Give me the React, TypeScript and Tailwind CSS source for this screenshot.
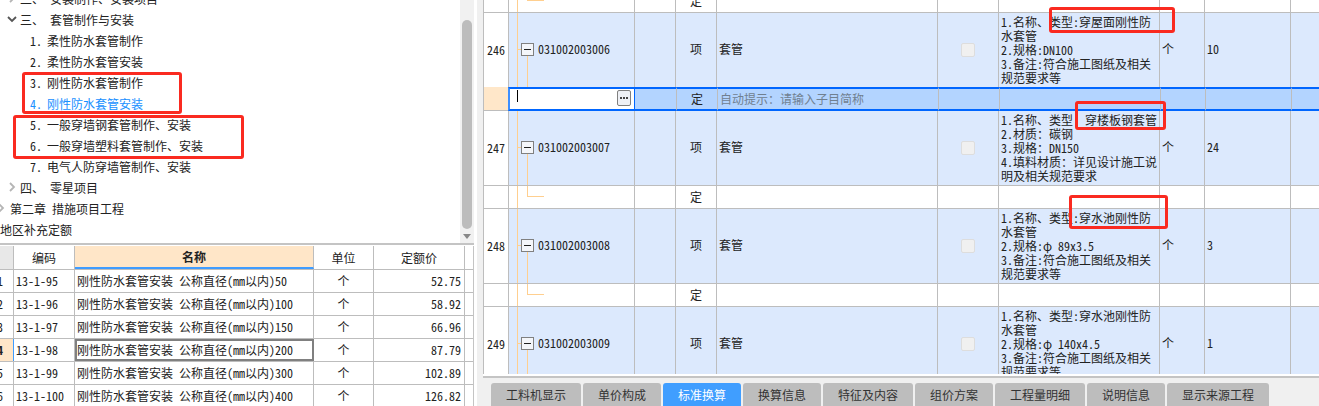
const font = "font-['Noto_Sans_Mono_CJK_SC','Liberation_Serif','Noto_Sans_CJK_SC',monospace]";

type TreeRow = { num?: string; text: string; pad: string; blue?: boolean; arrow?: "open" | "closed" };

const treeRows: TreeRow[] = [
  { text: "二、 安装制作、安装项目", pad: "pl-[20px]", arrow: "closed" },
  { text: "三、 套管制作与安装", pad: "pl-[20px]", arrow: "open" },
  { num: "1.", text: "柔性防水套管制作", pad: "pl-[30px]" },
  { num: "2.", text: "柔性防水套管安装", pad: "pl-[30px]" },
  { num: "3.", text: "刚性防水套管制作", pad: "pl-[30px]" },
  { num: "4.", text: "刚性防水套管安装", pad: "pl-[30px]", blue: true },
  { num: "5.", text: "一般穿墙钢套管制作、安装", pad: "pl-[30px]" },
  { num: "6.", text: "一般穿墙塑料套管制作、安装", pad: "pl-[30px]" },
  { num: "7.", text: "电气人防穿墙管制作、安装", pad: "pl-[30px]" },
  { text: "四、 零星项目", pad: "pl-[20px]", arrow: "closed" },
  { text: "第二章 措施项目工程", pad: "pl-[10px]", arrow: "closed" },
  { text: "地区补充定额", pad: "pl-0" },
];

const quotaRows = [
  ["1", "13-1-95", "刚性防水套管安装 公称直径(mm以内)50", "52.75"],
  ["2", "13-1-96", "刚性防水套管安装 公称直径(mm以内)100", "58.92"],
  ["3", "13-1-97", "刚性防水套管安装 公称直径(mm以内)150", "66.96"],
  ["4", "13-1-98", "刚性防水套管安装 公称直径(mm以内)200", "87.79"],
  ["5", "13-1-99", "刚性防水套管安装 公称直径(mm以内)300", "102.89"],
  ["6", "13-1-100", "刚性防水套管安装 公称直径(mm以内)400", "126.82"],
];

const tabs = [
  ["工料机显示", "w-[90px]"],
  ["单价构成", "w-[78px]"],
  ["标准换算", "w-[78px]"],
  ["换算信息", "w-[78px]"],
  ["特征及内容", "w-[90px]"],
  ["组价方案", "w-[78px]"],
  ["工程量明细", "w-[90px]"],
  ["说明信息", "w-[78px]"],
  ["显示来源工程", "w-[102px]"],
];

const cols = "grid grid-cols-[25px_126px_41px_41px_221px_61px_161px_45px_86px_29px]";
const cell = "border-r border-[#bdbdbd] h-full flex items-center";
const editCell = "bg-[#b3d4ff] border-y-2 border-[#0066ff] border-l border-l-[#bdbdbd]";

function Box({ className }: { className: string }) {
  return <div className={`absolute border-[3px] border-[#fa2a20] rounded-[3px] pointer-events-none ${className}`} />;
}

function Chevron({ open, className }: { open: boolean; className: string }) {
  return (
    <svg width="10" height="10" viewBox="0 0 10 10" className={`absolute ${className}`}>
      <path
        d={open ? "M1 3l4 4 4-4" : "M3 1l4 4-4 4"}
        fill="none"
        stroke={open ? "#555555" : "#b5b5b5"}
        strokeWidth="1.8"
      />
    </svg>
  );
}

function DefRow() {
  return (
    <div className={`${cols} h-[23px] border-b border-[#bdbdbd] bg-white shrink-0`}>
      <div className={cell} />
      <div className={`${cell} relative`}>
        <div className="absolute left-[8px] top-0 bottom-0 w-px bg-[#ffcf8f]" />
        <div className="absolute left-[18px] top-0 h-[11px] w-[17px] border-l border-b border-[#ffcf8f]" />
      </div>
      <div className={cell} />
      <div className={`${cell} justify-center`}>定</div>
      <div className={cell} />
      <div className={cell} />
      <div className={cell} />
      <div className={cell} />
      <div className={cell} />
      <div />
    </div>
  );
}

function ItemRow({ no, code, lines, qty }: { no: string; code: string; lines: string[]; qty: string }) {
  return (
    <div className={`${cols} h-[75px] border-b border-[#bdbdbd] bg-[#dce9fd] shrink-0`}>
      <div className={`${cell} bg-white justify-center pb-[1px]`}>{no}</div>
      <div className={`${cell} relative pl-[29px] pb-[3px]`}>
        <div className="absolute left-[8px] top-0 bottom-0 w-px bg-[#ffcf8f]" />
        <div className="absolute left-[8px] top-[36px] w-[5px] h-px bg-[#ffcf8f]" />
        <div className="absolute left-[18px] top-[42px] bottom-0 w-px bg-[#ffcf8f]" />
        <div className="absolute left-[12px] top-[30px] w-[13px] h-[13px] border border-[#808080] bg-[#f4f6fa] flex items-center justify-center">
          <div className="w-[7px] h-px bg-[#222222]" />
        </div>
        {code}
      </div>
      <div className={cell} />
      <div className={`${cell} justify-center pb-[2px]`}>项</div>
      <div className={`${cell} pl-[2px] pb-[2px]`}>套管</div>
      <div className={`${cell} justify-center`}>
        <div className="w-[14px] h-[14px] rounded-[2px] bg-[#f0f0f0] border border-[#dddddd]" />
      </div>
      <div className={`${cell} pl-[2px]`}>
        <div className="leading-[14px] whitespace-pre">
          {lines.map((l) => (
            <div key={l}>{l}</div>
          ))}
        </div>
      </div>
      <div className={`${cell} pl-[2px] pb-[2px]`}>个</div>
      <div className={`${cell} pl-[2px] pb-[2px]`}>{qty}</div>
      <div />
    </div>
  );
}

function EditRow() {
  return (
    <div className={`${cols} relative h-[24px] -mt-px shrink-0`}>
      <div className="bg-[#ffe7c9] border-r border-b border-[#bdbdbd] h-full" />
      <div className="relative h-full bg-white border-y-2 border-l-2 border-r border-[#0066ff] border-l-[#3d8fff] -ml-px">
        <div className="absolute left-[7px] top-[1px] w-px h-[12px] bg-black" />
        <div className="absolute right-[3px] top-[1px] w-[14px] h-[16px] rounded-[2px] border border-[#808080] bg-[#eef0f5] flex items-center justify-center gap-px">
          <div className="w-[2px] h-[2px] bg-[#444444]" />
          <div className="w-[2px] h-[2px] bg-[#444444]" />
          <div className="w-[2px] h-[2px] bg-[#444444]" />
        </div>
      </div>
      <div className="bg-[#b3d4ff] border-y-2 border-[#0066ff]" />
      <div className={`${editCell} flex items-center justify-center`}>定</div>
      <div className={`${editCell} flex items-center pl-[2px] text-[#708090]`}>自动提示：请输入子目简称</div>
      <div className={editCell} />
      <div className={editCell} />
      <div className={editCell} />
      <div className={editCell} />
      <div className={editCell} />
    </div>
  );
}

export default function App() {
  return (
    <div className={`relative w-[1319px] h-[406px] overflow-hidden flex bg-white text-[12px] leading-none text-[#222222] ${font}`}>
      {/* left: tree and quota table */}
      <div className="w-[477px] shrink-0 flex flex-col h-full">
        <div className="h-[245px] shrink-0 flex border-b-2 border-[#c4c4c4] mr-[3px]">
          <div className="flex-1 overflow-hidden">
            <div className="-mt-[12px]">
              {treeRows.map((r) => (
                <div key={r.text} className={`relative h-[21px] flex items-center whitespace-pre ${r.pad} ${r.blue ? "text-[#1890ff]" : ""}`}>
                  {r.arrow && (
                    <Chevron
                      open={r.arrow === "open"}
                      className={r.pad === "pl-[10px]" ? "-left-[4px] top-[5px]" : "left-[7px] top-[5px]"}
                    />
                  )}
                  {r.num && <span className="w-[17px] shrink-0">{r.num}</span>}
                  {r.text}
                </div>
              ))}
            </div>
          </div>
          <div className="w-[14px] shrink-0 bg-[#f1f1f1] flex flex-col items-center">
            <div className="h-[20px] shrink-0" />
            <div className="w-[10px] h-[209px] rounded-[5px] bg-[#bcbcbc] shrink-0" />
            <div className="flex-1 flex items-center justify-center">
              <div className="w-0 h-0 border-x-[4px] border-x-transparent border-t-[5px] border-t-[#888888]" />
            </div>
          </div>
        </div>
        <div className="mr-[3px] flex-1 overflow-hidden mt-[1px] border-r border-[#c4c4c4]">
          <div className="grid grid-cols-[14px_61px_239px_60px_91px] h-[24px] border-b border-[#bdbdbd]">
            <div className="bg-[#e8e8e8] border-r border-[#bdbdbd]" />
            <div className="border-r border-[#bdbdbd] flex items-center justify-center">编码</div>
            <div className="border-r border-[#bdbdbd] bg-[#ffe6c8] border-b-2 border-b-[#3f9cff] flex items-center justify-center font-bold">名称</div>
            <div className="border-r border-[#bdbdbd] flex items-center justify-center">单位</div>
            <div className="border-r border-[#bdbdbd] flex items-center justify-center">定额价</div>
          </div>
          {quotaRows.map((r) => {
            const on = r[0] === "4";
            return (
              <div key={r[0]} className="grid grid-cols-[14px_61px_239px_60px_91px] h-[23px] border-b border-[#bdbdbd]">
                <div className={`flex items-center justify-end pr-[10px] border-r ${on ? "bg-[#ffe6c8] border-[#3f9cff] font-bold" : "border-[#bdbdbd]"}`}>{r[0]}</div>
                <div className="border-r border-[#bdbdbd] flex items-center pl-[2px]">{r[1]}</div>
                <div className={`flex items-center whitespace-pre ${on ? "border-2 border-[#808080]" : "border-r border-[#bdbdbd] pl-[2px]"}`}>{r[2]}</div>
                <div className="border-r border-[#bdbdbd] flex items-center justify-center">个</div>
                <div className="border-r border-[#bdbdbd] flex items-center justify-end pr-[3px]">{r[3]}</div>
              </div>
            );
          })}
        </div>
      </div>

      {/* right: item grid and tabs */}
      <div className="flex-1 min-w-0 flex flex-col h-full bg-[#f0f0f0] pl-[6px]">
        <div className="h-[374px] shrink-0 overflow-hidden border-l border-[#bdbdbd] bg-white">
          <div className="-mt-[10px] flex flex-col">
            <DefRow />
            <ItemRow
              no="246"
              code="031002003006"
              qty="10"
              lines={["1.名称、类型:穿屋面刚性防", "水套管", "2.规格:DN100", "3.备注:符合施工图纸及相关", "规范要求等"]}
            />
            <EditRow />
            <ItemRow
              no="247"
              code="031002003007"
              qty="24"
              lines={["1.名称、类型　穿楼板钢套管", "2.材质：碳钢", "3.规格：DN150", "4.填料材质：详见设计施工说", "明及相关规范要求"]}
            />
            <DefRow />
            <ItemRow
              no="248"
              code="031002003008"
              qty="3"
              lines={["1.名称、类型:穿水池刚性防", "水套管", "2.规格:φ 89x3.5", "3.备注:符合施工图纸及相关", "规范要求等"]}
            />
            <DefRow />
            <ItemRow
              no="249"
              code="031002003009"
              qty="1"
              lines={["1.名称、类型:穿水池刚性防", "水套管", "2.规格:φ 140x4.5", "3.备注:符合施工图纸及相关", "规范要求等"]}
            />
          </div>
        </div>
        <div className="h-[2px] bg-white shrink-0" />
        <div className="h-[2px] bg-[#c4c4c4] shrink-0" />
        <div className="flex-1 flex items-end gap-[2px] pl-[8px]">
          {tabs.map(([label, w]) => (
            <div
              key={label}
              className={`h-[23px] rounded-t-[3px] flex items-center justify-center ${w} ${label === "标准换算" ? "bg-[#409eff] text-white" : "bg-[#bdbdbd] text-[#333333]"}`}
            >
              {label}
            </div>
          ))}
        </div>
      </div>

      {/* red annotation boxes */}
      <Box className="left-[22px] top-[72px] w-[160px] h-[42px]" />
      <Box className="left-[13px] top-[115px] w-[231px] h-[44px]" />
      <Box className="left-[1049px] top-[7px] w-[126px] h-[26px]" />
      <Box className="left-[1075px] top-[101px] w-[91px] h-[29px]" />
      <Box className="left-[1069px] top-[195px] w-[99px] h-[34px]" />
    </div>
  );
}
